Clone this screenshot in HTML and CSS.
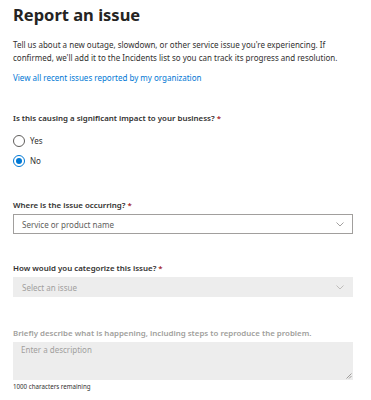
FILE: index.html
```html
<!DOCTYPE html>
<html lang="en">
<head>
  <meta charset="UTF-8" />
  <meta name="viewport" content="width=device-width, initial-scale=1.0" />
  <title>Report an issue</title>
  <link rel="stylesheet" href="styles.css">
</head>
<body>
  <div class="panel">
    <h1>Report an issue</h1>
    <p class="intro">Tell us about a new outage, slowdown, or other service issue you're experiencing. If confirmed, we'll add it to the Incidents list so you can track its progress and resolution.</p>
    <a class="link" href="#">View all recent issues reported by my organization</a>

    <div class="field impact">
      <div class="label">Is this causing a significant impact to your business? <span class="req">*</span></div>
      <div class="radios">
        <label class="radio"><span class="dot"></span>Yes</label>
        <label class="radio checked"><span class="dot"></span>No</label>
      </div>
    </div>

    <div class="field where">
      <div class="label">Where is the issue occurring? <span class="req">*</span></div>
      <div class="dropdown">
        <span>Service or product name</span>
        <svg class="chev" width="8" height="5" viewBox="0 0 8 5"><path d="M0.5 0.5 L4 4 L7.5 0.5" fill="none" stroke="#8a8886" stroke-width="0.8"/></svg>
      </div>
    </div>

    <div class="field category">
      <div class="label">How would you categorize this issue? <span class="req">*</span></div>
      <div class="dropdown disabled">
        <span>Select an issue</span>
        <svg class="chev" width="8" height="5" viewBox="0 0 8 5"><path d="M0.5 0.5 L4 4 L7.5 0.5" fill="none" stroke="#b3b0ad" stroke-width="0.8"/></svg>
      </div>
    </div>

    <div class="field describe">
      <div class="label muted">Briefly describe what is happening, including steps to reproduce the problem.</div>
      <div class="textarea">
        <span>Enter a description</span>
        <svg class="grip" width="6" height="6" viewBox="0 0 6 6"><path d="M0.5 5.5 L5.5 0.5 M3 5.5 L5.5 3" stroke="#8a8886" stroke-width="0.8"/></svg>
      </div>
      <div class="count">1000 characters remaining</div>
    </div>
  </div>
</body>
</html>
```

FILE: styles.css
```css
body {
  margin: 0;
  background: white;
  font-family: 'Noto Sans', 'Open Sans', sans-serif;
  color: #323130;
}
.panel {
  padding: 2px 18px 0 13px;
}
h1 {
  margin: 0;
  font-size: 16.5px;
  font-weight: 700;
  line-height: 26px;
  color: #252423;
}
.intro {
  margin: 10px 0 0;
  font-size: 8px;
  line-height: 13px;
  color: #323130;
}
.link {
  display: block;
  margin-top: 7px;
  font-size: 8px;
  line-height: 13px;
  color: #0078d4;
  text-decoration: none;
}
.impact { margin-top: 28px; }
.where { margin-top: 32px; }
.category { margin-top: 28px; }
.describe { margin-top: 30px; }
.label {
  font-size: 7.9px;
  font-weight: 600;
  line-height: 13px;
  margin-bottom: 2px;
}
.label.muted { color: #a19f9d; }
.req { color: #a4262c; }
.radios {
  display: flex;
  flex-direction: column;
  gap: 8px;
  margin-top: 10px;
}
.radio {
  display: flex;
  align-items: center;
  gap: 5px;
  font-size: 8px;
  line-height: 12px;
}
.dot {
  width: 12px;
  height: 12px;
  border: 1px solid #605e5c;
  border-radius: 50%;
  box-sizing: border-box;
  position: relative;
}
.checked .dot { border-color: #0078d4; }
.checked .dot::after {
  content: '';
  position: absolute;
  left: 2px;
  top: 2px;
  width: 6px;
  height: 6px;
  border-radius: 50%;
  background: #0078d4;
}
.dropdown {
  height: 20px;
  border: 1px solid #a19f9d;
  box-sizing: border-box;
  display: flex;
  align-items: center;
  justify-content: space-between;
  padding: 0 8px 0 8px;
  font-size: 8px;
  color: #605e5c;
}
.dropdown.disabled {
  border-color: #ededed;
  background: #ededed;
  color: #a19f9d;
}
.textarea {
  height: 38px;
  background: #ededed;
  box-sizing: border-box;
  padding: 2px 8px;
  font-size: 8px;
  color: #a19f9d;
  position: relative;
}
.grip {
  position: absolute;
  right: 1px;
  bottom: 1px;
}
.count {
  margin-top: 2px;
  font-size: 6.2px;
  line-height: 9px;
}
```
